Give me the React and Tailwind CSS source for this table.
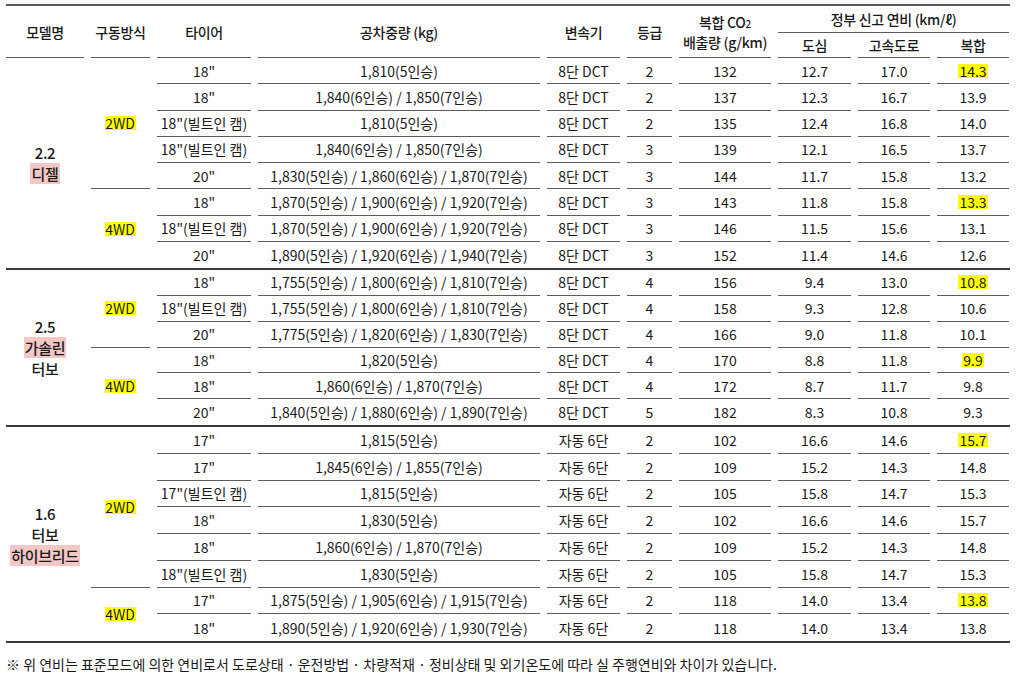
const cols =
  "grid grid-cols-[78px_59px_94px_282px_73px_45px_92px_73px_72px_72px] gap-x-[7px]";

const groups = [
  {
    model: [{ t: "2.2" }, { t: "디젤", pink: true }],
    rowsClass: "auto-rows-[26.25px]",
    modelSpan: "row-span-8",
    drives: [
      { at: 0, label: "2WD", span: "row-span-5", last: false },
      { at: 5, label: "4WD", span: "row-span-3", last: true },
    ],
    rows: [
      ['18"', "1,810(5인승)", "8단 DCT", "2", "132", "12.7", "17.0", "14.3", true],
      ['18"', "1,840(6인승) / 1,850(7인승)", "8단 DCT", "2", "137", "12.3", "16.7", "13.9"],
      ['18"(빌트인 캠)', "1,810(5인승)", "8단 DCT", "2", "135", "12.4", "16.8", "14.0"],
      ['18"(빌트인 캠)', "1,840(6인승) / 1,850(7인승)", "8단 DCT", "3", "139", "12.1", "16.5", "13.7"],
      ['20"', "1,830(5인승) / 1,860(6인승) / 1,870(7인승)", "8단 DCT", "3", "144", "11.7", "15.8", "13.2"],
      ['18"', "1,870(5인승) / 1,900(6인승) / 1,920(7인승)", "8단 DCT", "3", "143", "11.8", "15.8", "13.3", true],
      ['18"(빌트인 캠)', "1,870(5인승) / 1,900(6인승) / 1,920(7인승)", "8단 DCT", "3", "146", "11.5", "15.6", "13.1"],
      ['20"', "1,890(5인승) / 1,920(6인승) / 1,940(7인승)", "8단 DCT", "3", "152", "11.4", "14.6", "12.6"],
    ],
  },
  {
    model: [{ t: "2.5" }, { t: "가솔린", pink: true }, { t: "터보" }],
    rowsClass: "auto-rows-[25.85px]",
    modelSpan: "row-span-6",
    drives: [
      { at: 0, label: "2WD", span: "row-span-3", last: false },
      { at: 3, label: "4WD", span: "row-span-3", last: true },
    ],
    rows: [
      ['18"', "1,755(5인승) / 1,800(6인승) / 1,810(7인승)", "8단 DCT", "4", "156", "9.4", "13.0", "10.8", true],
      ['18"(빌트인 캠)', "1,755(5인승) / 1,800(6인승) / 1,810(7인승)", "8단 DCT", "4", "158", "9.3", "12.8", "10.6"],
      ['20"', "1,775(5인승) / 1,820(6인승) / 1,830(7인승)", "8단 DCT", "4", "166", "9.0", "11.8", "10.1"],
      ['18"', "1,820(5인승)", "8단 DCT", "4", "170", "8.8", "11.8", "9.9", true],
      ['18"', "1,860(6인승) / 1,870(7인승)", "8단 DCT", "4", "172", "8.7", "11.7", "9.8"],
      ['20"', "1,840(5인승) / 1,880(6인승) / 1,890(7인승)", "8단 DCT", "5", "182", "8.3", "10.8", "9.3"],
    ],
  },
  {
    model: [{ t: "1.6" }, { t: "터보" }, { t: "하이브리드", pink: true }],
    rowsClass: "auto-rows-[26.75px]",
    modelSpan: "row-span-8",
    drives: [
      { at: 0, label: "2WD", span: "row-span-6", last: false },
      { at: 6, label: "4WD", span: "row-span-2", last: true },
    ],
    rows: [
      ['17"', "1,815(5인승)", "자동 6단", "2", "102", "16.6", "14.6", "15.7", true],
      ['17"', "1,845(6인승) / 1,855(7인승)", "자동 6단", "2", "109", "15.2", "14.3", "14.8"],
      ['17"(빌트인 캠)', "1,815(5인승)", "자동 6단", "2", "105", "15.8", "14.7", "15.3"],
      ['18"', "1,830(5인승)", "자동 6단", "2", "102", "16.6", "14.6", "15.7"],
      ['18"', "1,860(6인승) / 1,870(7인승)", "자동 6단", "2", "109", "15.2", "14.3", "14.8"],
      ['18"(빌트인 캠)', "1,830(5인승)", "자동 6단", "2", "105", "15.8", "14.7", "15.3"],
      ['17"', "1,875(5인승) / 1,905(6인승) / 1,915(7인승)", "자동 6단", "2", "118", "14.0", "13.4", "13.8", true],
      ['18"', "1,890(5인승) / 1,920(6인승) / 1,930(7인승)", "자동 6단", "2", "118", "14.0", "13.4", "13.8"],
    ],
  },
];

function Group({ g }) {
  const cells = [];
  g.rows.forEach((r, i) => {
    const isLast = i === g.rows.length - 1;
    if (i === 0) {
      cells.push(
        <div
          key="model"
          className={`${g.modelSpan} flex flex-col items-center justify-center text-[15px] font-medium leading-[21px] tracking-[-0.3px]`}
        >
          {g.model.map((m) => (
            <span key={m.t} className={m.pink ? "bg-[#f4c7c7] px-[1px]" : ""}>
              {m.t}
            </span>
          ))}
        </div>
      );
    }
    const d = g.drives.find((x) => x.at === i);
    if (d) {
      cells.push(
        <div
          key={"d" + i}
          className={`${d.span} flex items-center justify-center ${
            d.last ? "" : "border-b border-[#5c5c5c]"
          }`}
        >
          <span className="bg-[#ffff00] pr-[1px]">{d.label}</span>
        </div>
      );
    }
    const bb = isLast ? "" : "border-b border-[#5c5c5c]";
    r.slice(0, 8).forEach((v, j) => {
      cells.push(
        <div key={i + "-" + j} className={`flex items-center justify-center whitespace-nowrap ${bb}`}>
          {j === 7 && r[8] ? <span className="bg-[#ffff00] px-[1px]">{v}</span> : v}
        </div>
      );
    });
  });
  return (
    <div className="border-b-2 border-[#3a3a3a]">
      <div className={`${cols} ${g.rowsClass}`}>{cells}</div>
    </div>
  );
}

export default function App() {
  const hb = "flex items-center justify-center border-b border-[#5c5c5c]";
  return (
    <div
      className="min-h-screen bg-white text-[#1a1a1a]"
      style={{ fontFamily: '"Noto Sans CJK KR", "Noto Sans", sans-serif' }}
    >
      <div className="ml-[6px] w-[1004px] pt-[4px] text-[14px] leading-none">
        <div className="border-t-2 border-[#5a5a5a]">
          <div className={`${cols} grid-rows-[27px_25px] text-[14px] font-medium tracking-[-0.3px]`}>
            <div className={`${hb} row-span-2`}>모델명</div>
            <div className={`${hb} row-span-2`}>구동방식</div>
            <div className={`${hb} row-span-2`}>타이어</div>
            <div className={`${hb} row-span-2`}>공차중량 (kg)</div>
            <div className={`${hb} row-span-2`}>변속기</div>
            <div className={`${hb} row-span-2`}>등급</div>
            <div className={`${hb} row-span-2 flex-col leading-[18px]`}>
              <span>
                복합 CO<span className="text-[10px]">2</span>
              </span>
              <span>배출량 (g/km)</span>
            </div>
            <div className={`${hb} col-span-3`}>정부 신고 연비 (km/ℓ)</div>
            <div className={hb}>도심</div>
            <div className={hb}>고속도로</div>
            <div className={hb}>복합</div>
          </div>
        </div>
        {groups.map((g, i) => (
          <Group key={i} g={g} />
        ))}
        <p className="mt-[14px] whitespace-nowrap text-[14px]">
          ※ 위 연비는 표준모드에 의한 연비로서 도로상태 · 운전방법 · 차량적재 · 정비상태 및 외기온도에 따라 실 주행연비와 차이가 있습니다.
        </p>
      </div>
    </div>
  );
}
